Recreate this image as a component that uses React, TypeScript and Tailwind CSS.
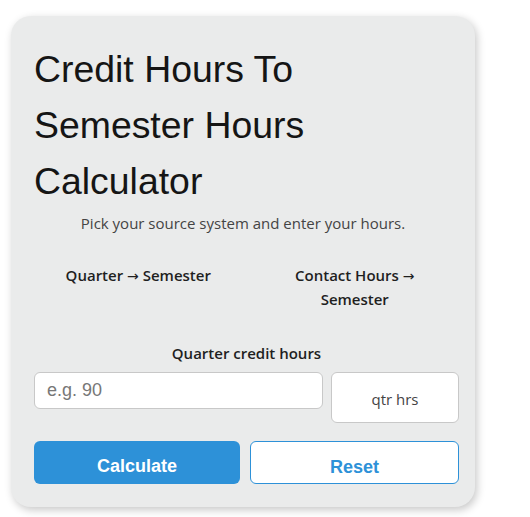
export default function App() {
  return (
    <div className="min-h-screen bg-white pt-[16px] pl-[11px]">
      {/* Card */}
      <div className="w-[464px] rounded-[20px] bg-[#eaebeb] pl-[23px] pr-[16px] pt-[25px] pb-[23px] shadow-[2px_3px_8px_rgba(0,0,0,0.22)] font-['Open_Sans',sans-serif] text-[#222]">
        <h1 className="font-['Liberation_Sans',Arial,sans-serif] text-[37.4px] leading-[56px] font-normal text-[#151515]">
          Credit Hours To Semester Hours Calculator
        </h1>

        <p className="mt-[2px] pr-[7px] text-center text-[15px] leading-[24px] text-[#444]">
          Pick your source system and enter your hours.
        </p>

        {/* Source tabs */}
        <div className="mt-[28px] grid grid-cols-2 items-start gap-[8px]">
          <button className="px-[24px] text-center text-[15px] font-semibold leading-[24px] text-[#1f1f1f]">
            Quarter <span className="font-['DejaVu_Sans',sans-serif] text-[14px] font-normal leading-none">→</span> Semester
          </button>
          <button className="px-[24px] text-center text-[15px] font-semibold leading-[24px] text-[#1f1f1f]">
            Contact Hours <span className="font-['DejaVu_Sans',sans-serif] text-[14px] font-normal leading-none">→</span> Semester
          </button>
        </div>

        {/* Input */}
        <label className="mt-[30px] block text-center text-[15px] font-semibold leading-[24px] text-[#1f1f1f]">
          Quarter credit hours
        </label>
        <div className="mt-[7px] flex items-start gap-[8px]">
          <input
            className="h-[37px] min-w-0 flex-1 rounded-[6px] border border-[#c8c8c8] bg-white px-[12px] font-['Liberation_Sans',Arial,sans-serif] text-[18px] text-[#333] placeholder:text-[#777] outline-none"
            placeholder="e.g. 90"
          />
          <div className="flex h-[51px] w-[128px] items-center justify-center rounded-[6px] border border-[#c8c8c8] bg-white pt-[4px] text-[15px] text-[#444]">
            qtr hrs
          </div>
        </div>

        {/* Actions */}
        <div className="mt-[18px] grid grid-cols-[206px_1fr] gap-[10px]">
          <button className="h-[43px] rounded-[6px] bg-[#2d91d8] pt-[7px] font-['Liberation_Sans',Arial,sans-serif] text-[18px] font-bold text-white">
            Calculate
          </button>
          <button className="h-[43px] rounded-[6px] border border-[#2d91d8] bg-white pt-[9px] font-['Liberation_Sans',Arial,sans-serif] text-[18px] font-bold text-[#2d91d8]">
            Reset
          </button>
        </div>
      </div>
    </div>
  );
}
